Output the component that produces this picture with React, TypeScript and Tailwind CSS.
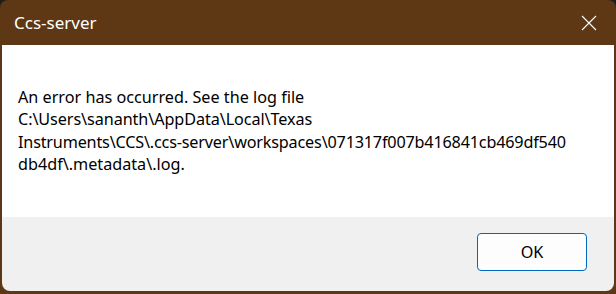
import React from "react";

export default function App() {
  const font = { fontFamily: '"Segoe UI", "Noto Sans", "Open Sans", sans-serif' };
  return (
    <div className="w-[616px] h-[294px] bg-[#1e1e1e] overflow-hidden" style={font}>
      <div className="w-full h-full rounded-t-[8px] bg-[#5e3714] flex flex-col px-[2px] pb-[3px]">
        <div className="h-[45px] shrink-0 flex items-center justify-between pl-[12px] pr-[17px]">
          <span className="text-white text-[17px] leading-none">Ccs-server</span>
          <svg width="16" height="16" viewBox="0 0 16 16" className="text-white">
            <path d="M1 1 L15 15 M15 1 L1 15" stroke="currentColor" strokeWidth="1.1" fill="none" />
          </svg>
        </div>
        <div className="flex-1 bg-white pl-[16px] pt-[41px] text-[16.2px] leading-[22.4px] text-black">
          <div>An error has occurred. See the log file</div>
          <div className="tracking-[-0.08px]">C:\Users\sananth\AppData\Local\Texas</div>
          <div className="tracking-[-0.18px]">Instruments\CCS\.ccs-server\workspaces\071317f007b416841cb469df540</div>
          <div>db4df\.metadata\.log.</div>
        </div>
        <div className="h-[74px] shrink-0 bg-[#f0f0f0] rounded-b-[8px] flex justify-end items-start pt-[16px] pr-[27px]">
          <button className="w-[110px] h-[38px] rounded-[4px] border border-[#0067c0] bg-[#fdfdfd] text-[16.2px] text-black flex items-center justify-center">
            OK
          </button>
        </div>
      </div>
    </div>
  );
}
